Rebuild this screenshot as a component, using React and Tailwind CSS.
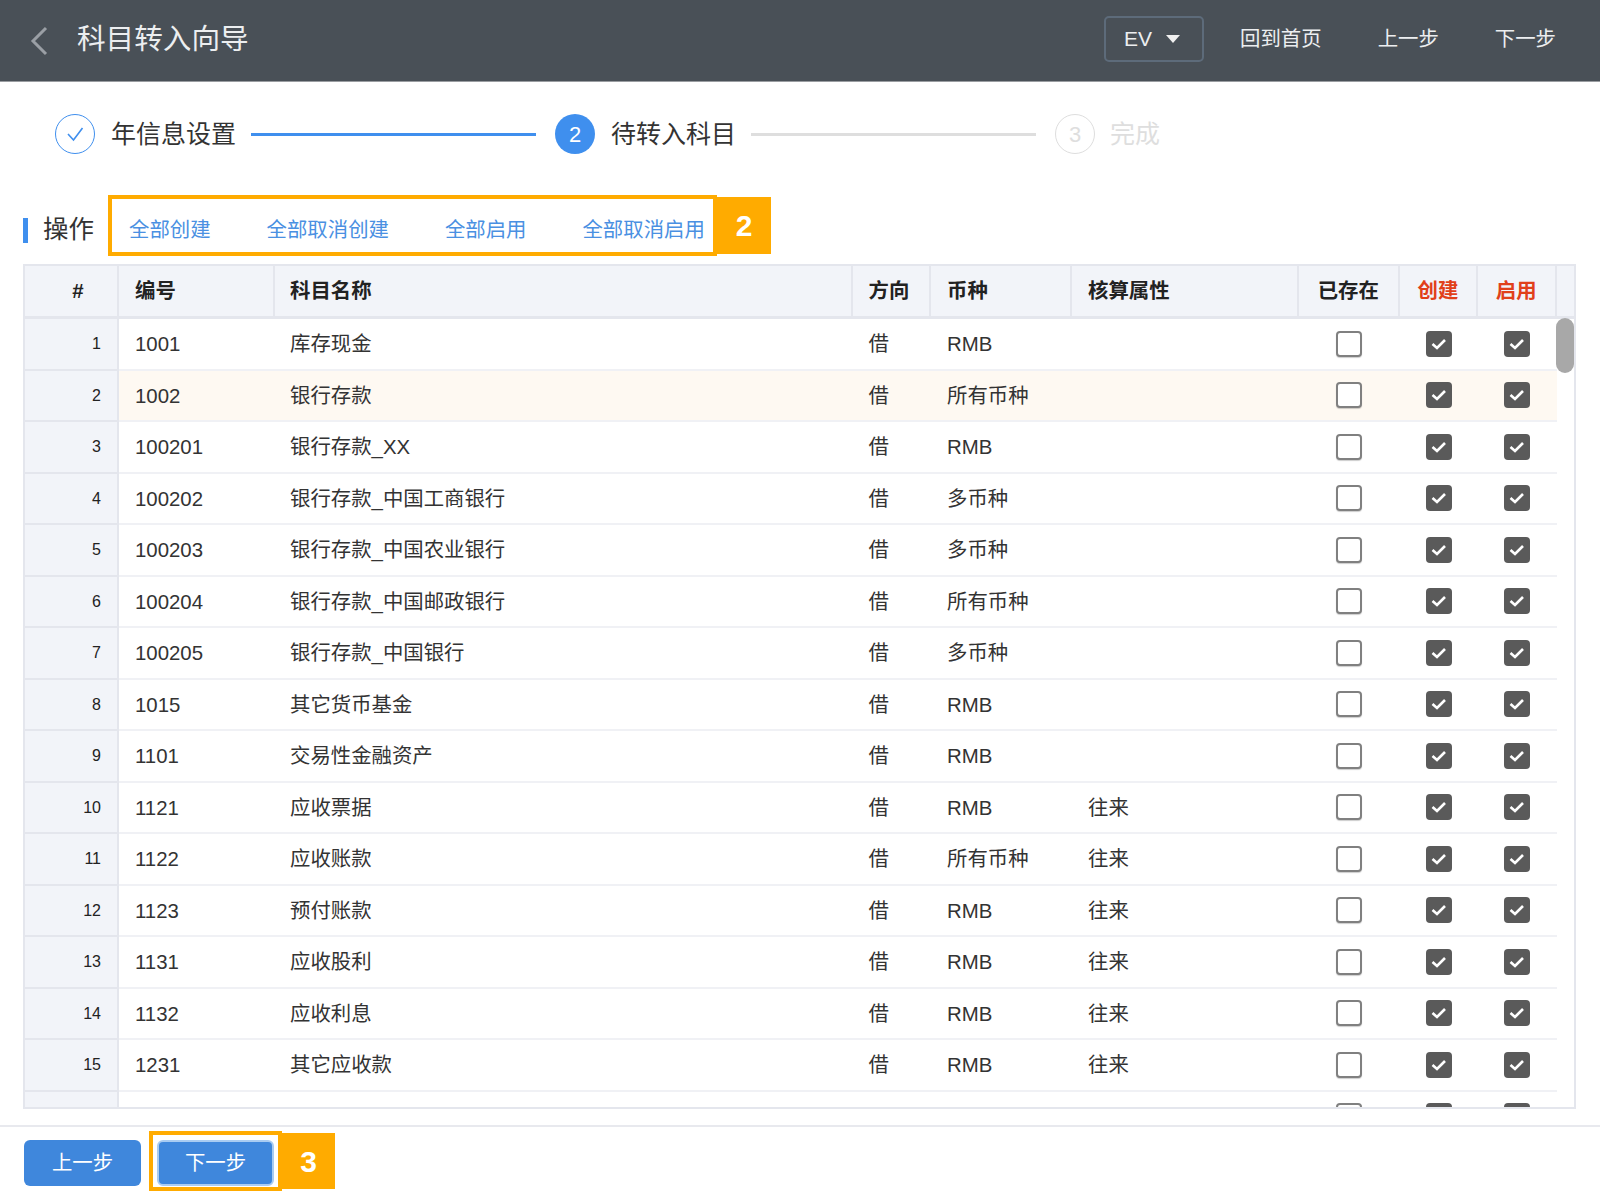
const FONT = "font-['Liberation_Sans','Noto_Sans_CJK_SC',sans-serif]";

const rows = [
  [1, '1001', '库存现金', 'RMB', ''],
  [2, '1002', '银行存款', '所有币种', ''],
  [3, '100201', '银行存款_XX', 'RMB', ''],
  [4, '100202', '银行存款_中国工商银行', '多币种', ''],
  [5, '100203', '银行存款_中国农业银行', '多币种', ''],
  [6, '100204', '银行存款_中国邮政银行', '所有币种', ''],
  [7, '100205', '银行存款_中国银行', '多币种', ''],
  [8, '1015', '其它货币基金', 'RMB', ''],
  [9, '1101', '交易性金融资产', 'RMB', ''],
  [10, '1121', '应收票据', 'RMB', '往来'],
  [11, '1122', '应收账款', '所有币种', '往来'],
  [12, '1123', '预付账款', 'RMB', '往来'],
  [13, '1131', '应收股利', 'RMB', '往来'],
  [14, '1132', '应收利息', 'RMB', '往来'],
  [15, '1231', '其它应收款', 'RMB', '往来'],
];

const COLS = 'grid grid-cols-[94px_156px_577.5px_78.5px_141px_226.5px_101.5px_78px_78.5px]';

function Box({ checked }) {
  if (checked) {
    return (
      <span className="flex h-[26px] w-[26px] items-center justify-center rounded-[4px] bg-[#5a5a5a]">
        <svg width="20" height="20" viewBox="0 0 20 20" fill="none" stroke="#ffffff" strokeWidth="2.6">
          <path d="M3.5 10 L8 14 L16 6" />
        </svg>
      </span>
    );
  }
  return <span className="block h-[26px] w-[26px] rounded-[4px] border-2 border-[#808080] bg-white shadow-[0_1px_1px_rgba(0,0,0,0.2)]" />;
}

function Head({ children, className = '' }) {
  return (
    <div className={`flex items-center border-r-2 border-[#e4e6ed] text-[20.4px] font-bold ${className}`}>
      {children}
    </div>
  );
}

function Row({ r, tint }) {
  const cell = 'flex items-center border-b-2 border-[#f0f1f5]';
  return (
    <div className={`${COLS} h-[51.5px] w-[1531.5px] items-stretch text-[20.4px] ${tint ? 'bg-[#fef9f2]' : ''}`}>
      <div className="flex items-center justify-end border-b-2 border-r-2 border-[#e4e6ed] bg-[#f2f4f9] pr-[16px] pt-[1px] text-[16px] text-[#222]">{r[0]}</div>
      <div className={`${cell} pl-[16px] pt-[2px]`}>{r[1]}</div>
      <div className={`${cell} pl-[15px] pt-[2px]`}>{r[2]}</div>
      <div className={`${cell} pl-[16px] pt-[2px]`}>{r[0] ? '借' : ''}</div>
      <div className={`${cell} pl-[16px] pt-[2px]`}>{r[3]}</div>
      <div className={`${cell} pl-[16px] pt-[2px]`}>{r[4]}</div>
      <div className={`${cell} justify-center`}><Box /></div>
      <div className={`${cell} justify-center`}><Box checked /></div>
      <div className={`${cell} justify-center`}><Box checked /></div>
    </div>
  );
}

export default function App() {
  return (
    <div className={`relative h-[1200px] w-full overflow-hidden bg-white text-[#333] ${FONT}`}>
      <header className="flex h-[82px] items-center border-b border-[#9a9da1] bg-[#495057] pb-[3px] pl-[28px] pr-[44px] text-[#eceef0]">
        <svg width="22" height="30" viewBox="0 0 22 30" fill="none" stroke="#9a9fa5" strokeWidth="3" className="mt-[3px]">
          <path d="M18 2 L5 15 L18 28" />
        </svg>
        <h1 className="ml-[27px] text-[28.6px] font-normal leading-none">科目转入向导</h1>
        <div className="ml-auto flex h-[46px] w-[100px] items-center rounded-[5px] border-2 border-[#5d6b7a] pl-[18px] text-[21px]">
          EV
          <span className="ml-[14px] h-0 w-0 border-x-[7px] border-t-[8px] border-x-transparent border-t-[#f0f0f0]" />
        </div>
        <span className="ml-[36px] text-[20.4px]">回到首页</span>
        <span className="ml-[56px] text-[20.4px]">上一步</span>
        <span className="ml-[56px] text-[20.4px]">下一步</span>
      </header>

      <div className="mt-[32px] flex h-[40px] items-center pl-[55px] text-[25px]">
        <span className="flex h-[40px] w-[40px] items-center justify-center rounded-full border border-[#3f8fee]">
          <svg width="22" height="22" viewBox="0 0 22 22" fill="none" stroke="#3f8fee" strokeWidth="1.6">
            <path d="M4 11 L9.5 17 L18.5 5" />
          </svg>
        </span>
        <span className="ml-[16px] w-[125px] whitespace-nowrap pt-[1px]">年信息设置</span>
        <span className="ml-[15px] h-[3px] w-[285px] bg-[#3f8fee]" />
        <span className="ml-[19px] flex h-[40px] w-[40px] items-center justify-center rounded-full bg-[#3f8fee] text-[22px] text-white">2</span>
        <span className="ml-[16px] w-[125px] whitespace-nowrap pt-[1px]">待转入科目</span>
        <span className="ml-[15px] h-[3px] w-[285px] bg-[#dedede]" />
        <span className="ml-[19px] flex h-[40px] w-[40px] items-center justify-center rounded-full border border-[#dedede] text-[22px] text-[#dedede]">3</span>
        <span className="ml-[15px] whitespace-nowrap pt-[1px] text-[#dedede]">完成</span>
      </div>

      <div className="relative ml-[23px] mt-[59px] flex h-[34px] items-center">
        <span className="h-[25px] w-[5px] bg-[#3f8fee]" />
        <span className="ml-[15px] text-[25.5px] leading-none">操作</span>
        <div className="ml-[35px] flex gap-[56px] text-[20.4px] text-[#4a90e2]">
          <span>全部创建</span>
          <span>全部取消创建</span>
          <span>全部启用</span>
          <span>全部取消启用</span>
        </div>
        <div className="absolute left-[85px] top-[-18px] h-[61px] w-[609px] border-4 border-[#ffab00]" />
        <div className="absolute left-[694px] top-[-16px] flex h-[57px] w-[54px] items-center justify-center bg-[#ffab00] text-[30px] font-bold text-white">2</div>
      </div>

      <div className="relative ml-[23px] mr-[24px] mt-[17px] h-[845px] overflow-hidden border-2 border-[#e4e6ed]">
        <div className="grid h-[53px] grid-cols-[94px_156px_577.5px_78.5px_141px_226.5px_101.5px_78px_78.5px_1fr] border-b-[3px] border-[#e4e6ed] bg-[#f2f4f9] text-[#222]">
          <Head className="justify-center pl-[14px]">#</Head>
          <Head className="pl-[16px]">编号</Head>
          <Head className="pl-[15px]">科目名称</Head>
          <Head className="pl-[16px]">方向</Head>
          <Head className="pl-[16px]">币种</Head>
          <Head className="pl-[16px]">核算属性</Head>
          <Head className="justify-center">已存在</Head>
          <Head className="justify-center text-[#e1401a]">创建</Head>
          <Head className="justify-center text-[#e1401a]">启用</Head>
          <div />
        </div>
        {rows.map((r, i) => <Row key={r[0]} r={r} tint={i === 1} />)}
        <Row r={['', '', '', '', '']} />
        <div className="absolute right-0 top-[52px] h-[55px] w-[18px] rounded-full bg-[#a8a8a8]" />
      </div>

      <div className="mt-[16px] flex h-[65px] items-start gap-[16px] border-t-2 border-[#e8e9ee] pl-[24px] pt-[13px]">
        <button className="h-[46px] w-[117px] rounded-[6px] bg-[#3f87dc] text-[20.4px] text-white">上一步</button>
        <div className="relative">
          <button className="h-[46px] w-[117px] rounded-[6px] border-2 border-[#a9ccf2] bg-[#3f87dc] text-[20.4px] text-white">下一步</button>
          <div className="absolute left-[-8px] top-[-9px] h-[60px] w-[133px] border-4 border-[#ffab00]" />
          <div className="absolute left-[125px] top-[-7px] flex h-[56px] w-[53px] items-center justify-center bg-[#ffab00] text-[30px] font-bold text-white">3</div>
        </div>
      </div>
    </div>
  );
}
